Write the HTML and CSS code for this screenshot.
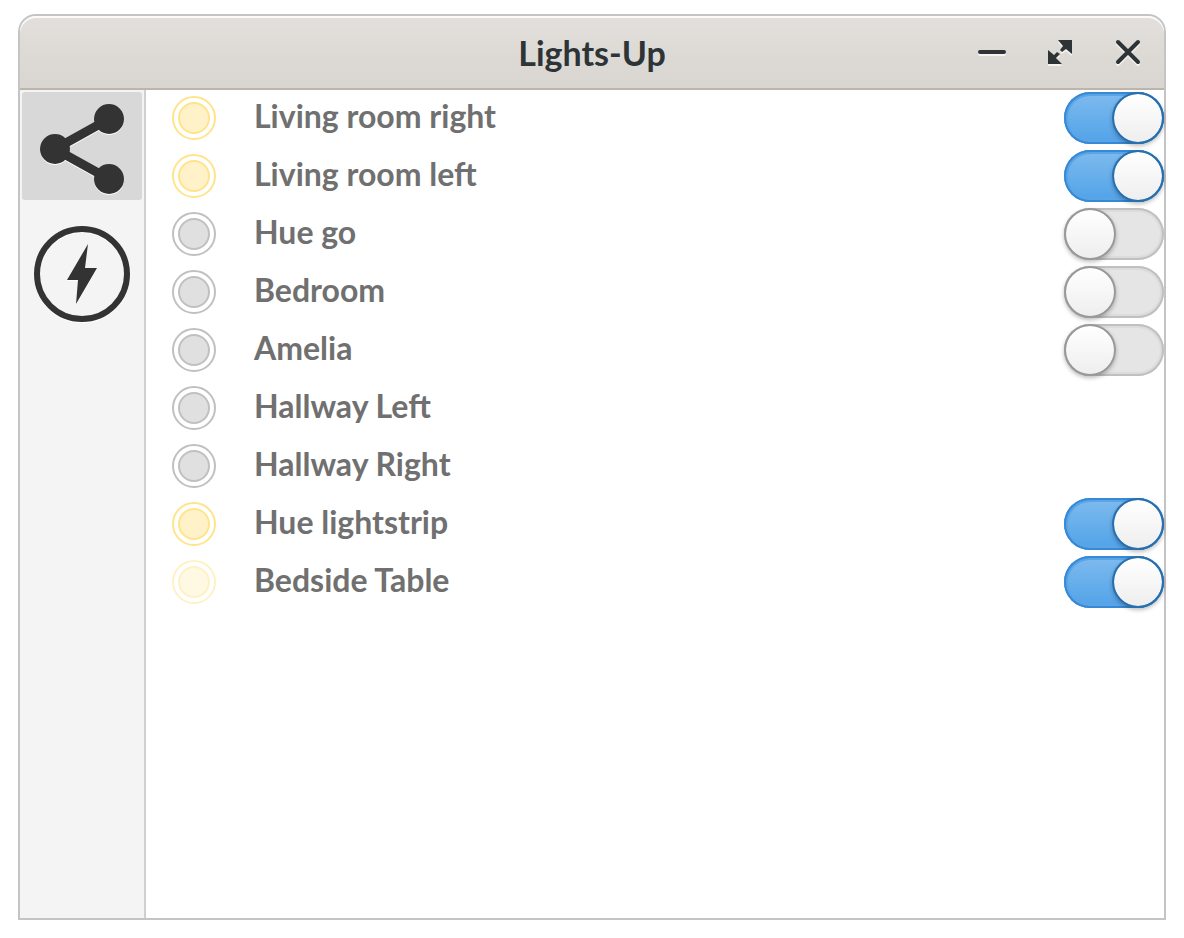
FILE: index.html
```
<!DOCTYPE html>
<html lang="en">
<head>
<meta charset="utf-8">
<title>Lights-Up</title>
<link rel="stylesheet" href="styles.css">
</head>
<body>
<div class="window">
  <header class="titlebar">
    <h1 class="title">Lights-Up</h1>
    <div class="controls">
      <button class="control" aria-label="Minimize"><svg viewBox="0 0 28 28"><path class="stroke" d="M2 14H26"/></svg></button>
      <button class="control" aria-label="Maximize"><svg viewBox="0 0 28 28"><path d="M12 2H26V16L20 11L16 14L14 12L17 8ZM2 12L8 17L11 14L14 16L10 20L16 26H2Z"/></svg></button>
      <button class="control" aria-label="Close"><svg viewBox="0 0 28 28"><path class="stroke" d="M4 4L24 24M24 4L4 24"/></svg></button>
    </div>
  </header>
  <div class="body">
    <nav class="sidebar">
      <button class="tab selected" aria-label="Lights"><svg viewBox="0 0 96 96"><path class="link" d="M75 21L21 51L75 81"/><circle cx="21" cy="51" r="15"/><circle cx="75" cy="21" r="15"/><circle cx="75" cy="81" r="15"/></svg></button>
      <button class="tab" aria-label="Power"><svg viewBox="0 0 96 96"><circle class="ring" cx="48" cy="48" r="45"/><path d="M54 18L51 42H63L42 78L44 54H33Z"/></svg></button>
    </nav>
    <main class="lights">
      <div class="light"><span class="lamp lit"></span><label class="name" for="l1">Living room right</label><input class="switch" type="checkbox" id="l1" checked></div>
      <div class="light"><span class="lamp lit"></span><label class="name" for="l2">Living room left</label><input class="switch" type="checkbox" id="l2" checked></div>
      <div class="light"><span class="lamp"></span><label class="name" for="l3">Hue go</label><input class="switch" type="checkbox" id="l3"></div>
      <div class="light"><span class="lamp"></span><label class="name" for="l4">Bedroom</label><input class="switch" type="checkbox" id="l4"></div>
      <div class="light"><span class="lamp"></span><label class="name" for="l5">Amelia</label><input class="switch" type="checkbox" id="l5"></div>
      <div class="light"><span class="lamp"></span><span class="name">Hallway Left</span></div>
      <div class="light"><span class="lamp"></span><span class="name">Hallway Right</span></div>
      <div class="light"><span class="lamp lit"></span><label class="name" for="l8">Hue lightstrip</label><input class="switch" type="checkbox" id="l8" checked></div>
      <div class="light"><span class="lamp lit dim"></span><label class="name" for="l9">Bedside Table</label><input class="switch" type="checkbox" id="l9" checked></div>
    </main>
  </div>
</div>
</body>
</html>
```
FILE: styles.css
```
*, *::before { box-sizing: border-box; }
body {
  margin: 0;
  min-height: 100vh;
  padding: 14px 18px 18px;
  display: flex;
  background: #fff;
  font-family: Lato, "Open Sans", sans-serif;
}
button { margin: 0; padding: 0; border: 0; background: none; font: inherit; }
svg { display: block; }
.window {
  flex: 1;
  display: flex;
  flex-direction: column;
  border: 2px solid #c4c4c4;
  border-radius: 18px 18px 0 0;
  background: #fff;
}
.titlebar {
  display: grid;
  grid-template-columns: 1fr auto 1fr;
  align-items: center;
  height: 74px;
  border-bottom: 2px solid #bcb5ab;
  border-radius: 16px 16px 0 0;
  background: linear-gradient(#e2dfdc, #d9d6d1);
  box-shadow: inset 0 2px 0 #fbfbfa;
}
.title {
  grid-column: 2;
  margin: 0;
  padding-top: 2px;
  font-size: 34px;
  line-height: 40px;
  font-weight: 700;
  color: #2e3436;
}
.controls {
  justify-self: end;
  display: flex;
  gap: 40px;
  padding-right: 22px;
}
.control {
  width: 28px;
  height: 28px;
  fill: #2e3436;
  filter: drop-shadow(0 2px 0 #f4f3f2);
}
.stroke { fill: none; stroke: #2e3436; stroke-width: 4; stroke-linecap: round; }
.body { flex: 1; display: flex; }
.sidebar {
  display: flex;
  flex-direction: column;
  gap: 20px;
  padding: 2px;
  border-right: 2px solid #d0d0d0;
  background: #f4f4f4;
}
.tab {
  display: flex;
  justify-content: center;
  align-items: center;
  width: 120px;
  height: 108px;
  border-radius: 3px;
  fill: #333;
}
.tab.selected { background: #d8d8d8; }
.tab svg { width: 96px; height: 96px; overflow: visible; filter: drop-shadow(0 1px 0 #fff); }
.link { fill: none; stroke: #333; stroke-width: 9; }
.ring { fill: none; stroke: #333; stroke-width: 6; }
.lights {
  flex: 1;
  display: flex;
  flex-direction: column;
  gap: 6px;
  padding-top: 2px;
}
.light {
  display: flex;
  align-items: center;
  height: 52px;
  padding-left: 26px;
}
.lamp {
  width: 44px;
  height: 44px;
  padding: 4px;
  border: 2px solid #c0c0c0;
  border-radius: 50%;
}
.lamp::before {
  content: "";
  display: block;
  height: 32px;
  border: 2px solid #c0c0c0;
  border-radius: 50%;
  background: #e0e0e0;
}
.lit, .lit::before { border-color: #ffe48b; }
.lit::before { background: #fff2c8; }
.dim { opacity: 0.5; }
.name {
  flex: 1;
  padding: 0 0 4px 38px;
  font-size: 32px;
  line-height: 40px;
  font-weight: 700;
  color: #707070;
}
.switch {
  appearance: none;
  display: flex;
  width: 100px;
  height: 52px;
  margin: 0;
  border-radius: 26px;
  background: #e5e5e5;
  box-shadow: inset 0 0 0 2px #c0c0c0, inset 0 0 0 4px #dcdcdc;
}
.switch::before {
  content: "";
  width: 52px;
  height: 52px;
  border: 2px solid #999;
  border-radius: 50%;
  background: linear-gradient(#fff, #eee) padding-box;
  box-shadow: 0 2px 4px #0004;
}
.switch:checked {
  justify-content: flex-end;
  background: linear-gradient(#7fbbee, #50a2e8);
  box-shadow: inset 0 0 0 2px #3689d6, inset 0 0 0 4px #5ba5e4;
}
.switch:checked::before { border-color: #296fad; }
```
